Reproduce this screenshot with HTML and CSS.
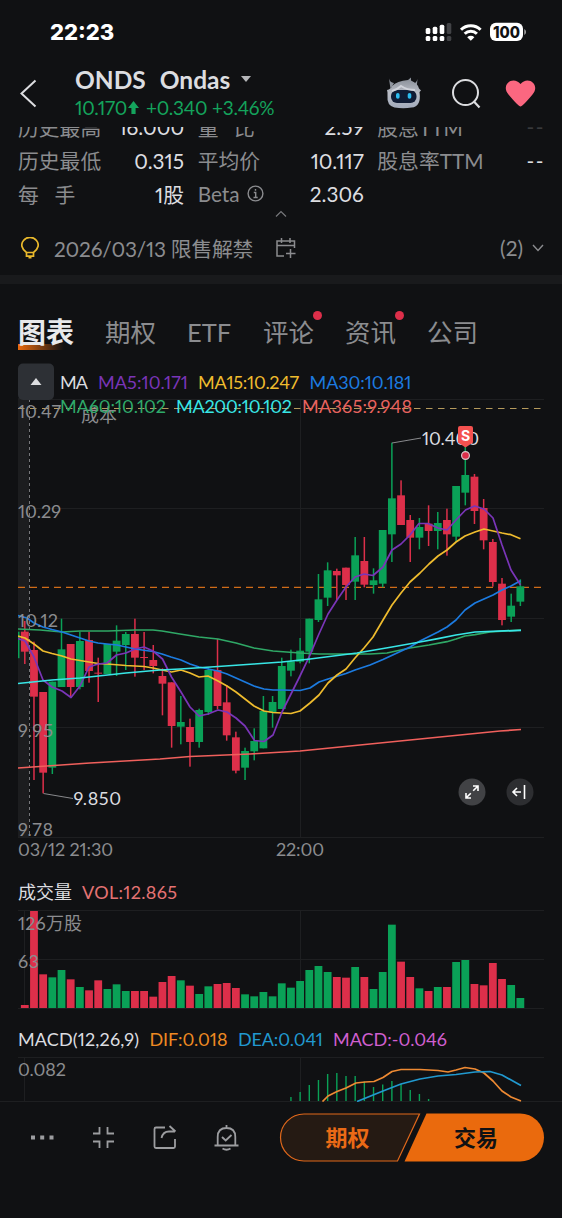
FILE: index.html
```html
<!doctype html>
<html lang="zh">
<head>
	<meta charset="UTF-8">
	<meta name="viewport" content="width=device-width, initial-scale=1.0">
	<title>ONDS Ondas</title>
	<link rel="stylesheet" href="styles.css">
</head>
<body>
	<div class="container">
		<div class="status">
			<span class="time">22:23</span>
			<svg class="signal" width="104" height="22" viewBox="424 21 104 22">
				<g fill="#fff">
					<rect x="425.7" y="28" width="4.6" height="6" rx="1.5"/><rect x="432.7" y="26.7" width="4.6" height="7.3" rx="1.5"/><rect x="439.7" y="24.7" width="4.6" height="9.3" rx="1.5"/>
					<rect x="425.7" y="36" width="4.6" height="5" rx="1.5"/><rect x="432.7" y="36" width="4.6" height="5" rx="1.5"/><rect x="439.7" y="36" width="4.6" height="5" rx="1.5"/>
				</g>
				<g fill="#424346"><rect x="446.7" y="23" width="4.6" height="11" rx="1.5"/><rect x="446.7" y="36" width="4.6" height="5" rx="1.5"/></g>
				<g fill="none" stroke="#fff" stroke-width="3">
					<path d="M461 29.700a14 14 0 0 1 19.600 0"/><path d="M464.700 33.700a8.600 8.600 0 0 1 12.200 0"/>
				</g>
				<path d="M467.200 37.200a5.200 5.200 0 0 1 7.200 0l-3.600 3.500z" fill="#fff"/>
				<rect x="490" y="22.700" width="33" height="18.300" rx="6" fill="#fff"/>
				<path d="M524.300 29v6q1.700-1 1.700-3t-1.700-3z" fill="#aaa"/>
				<text x="493" y="37.600" textLength="27" lengthAdjust="spacingAndGlyphs" class="battery">100</text>
			</svg>
		</div>
		<div class="header">
			<svg class="back" width="20" height="30" viewBox="18 79 20 30"><path d="M35.500 81.500L21.500 94.500L35.500 107.500" fill="none" stroke="#dcdde0" stroke-width="2"/></svg>
			<div class="stock">
				<div class="name"><span>ONDS</span><span class="company">Ondas</span><i class="caret"></i></div>
				<div class="price">
					<span class="last">10.170</span>
					<svg width="11" height="14" viewBox="0 0 11 14"><path d="M5.500 0L11 7H7.600V13H3.400V7H0z" fill="#14a35c"/></svg>
					<span class="diff">+0.340</span><span class="rate">+3.46%</span>
				</div>
			</div>
			<svg width="160" height="36" viewBox="384 76 160 36">
				<defs>
					<linearGradient id="fur" x1="0" y1="0" x2="0" y2="1"><stop offset="0" stop-color="#858b94"/><stop offset=".5" stop-color="#b9bdc6"/><stop offset="1" stop-color="#a2abbc"/></linearGradient>
				</defs>
				<path d="M389 79.500q1 4 5 4.500l-3.500 6zM417.500 80q-1 4-4.500 5l3.500 5z" fill="#8f959e"/>
				<path d="M387 91q4-1 5-4q5-5 16-6l3-2.500v3q7 3 8 8l2 2l-1.500 1.500q2 15-8 15.500q-8 1.500-17 0q-8-2-7-12v-3z" fill="url(#fur)"/>
				<rect x="391" y="91" width="25.500" height="13" rx="6" fill="#101c35"/>
				<path d="M392 92q6-2 9-5q6 4 14 4" fill="none" stroke="#d0d3da" stroke-width="2"/>
				<rect x="396" y="94" width="3.600" height="5.800" rx="1.800" fill="#2cbcf0"/><rect x="407.700" y="94" width="3.600" height="5.800" rx="1.800" fill="#2cbcf0"/>
				<circle cx="465.500" cy="93.500" r="12.500" fill="none" stroke="#dcdde0" stroke-width="2"/>
				<path d="M473.500 102l6 6.500" stroke="#dcdde0" stroke-width="2.200"/>
				<path d="M520.500 107.500q-2 0-12-12c-6-7-1-14 5-14q4 0 7 3.500q3-3.500 7-3.500c6 0 11 7 5 14q-10 12-12 12z" fill="#fb6780"/>
			</svg>
		</div>
		<div class="quotes">
			<div class="grid">
				<p><label>历史最高</label><b>16.000</b></p><p><label>量&emsp;比</label><b>2.59</b></p><p><label>股息TTM</label><b class="dash none">--</b></p>
				<p><label>历史最低</label><b>0.315</b></p><p><label>平均价</label><b>10.117</b></p><p><label>股息率TTM</label><b class="dash">--</b></p>
				<p><label>每&emsp;手</label><b>1股</b></p>
				<p><label>Beta <svg width="17" height="17" viewBox="0 0 17 17" fill="none" stroke="#8b8c8f" stroke-width="1.400"><circle cx="8.500" cy="8.500" r="7.400"/><path d="M6.800 7.500h1.900v5M6.500 12.500h4.200M8.500 4v1.700"/></svg></label><b>2.306</b></p>
			</div>
			<svg class="fold" width="12" height="8" viewBox="0 0 12 8"><path d="M1 6.500L6 1.500L11 6.500" fill="none" stroke="#77787b" stroke-width="1.200"/></svg>
		</div>
		<div class="event">
			<svg width="18" height="22" viewBox="0 0 18 22" fill="none" stroke="#e9b92c" stroke-width="1.700"><path d="M5.500 15.500C.500 12-.5 7 2.500 3.500a8.200 8.200 0 0 1 13 0c3 3.500 2 8.500-3 12zM5.500 15.500v3.700h7v-3.700M7.500 20.700h3"/></svg>
			<span class="event_text">2026/03/13 限售解禁</span>
			<svg class="calendar" width="20" height="20" viewBox="0 0 20 20" fill="none" stroke="#8b8c8f" stroke-width="1.500"><path d="M8 18H1V3H18.500V10M1 7.500H18.500M5.500 0V5M14 0V5M14.500 11V20M10 15.500H19.500"/></svg>
			<span class="event_count">(2)</span>
			<svg width="12" height="8" viewBox="0 0 12 8"><path d="M1 1L6 6.500L11 1" fill="none" stroke="#8b8c8f" stroke-width="1.400"/></svg>
		</div>
		<ul class="tabs">
			<li class="active"><span>图表</span></li>
			<li>期权</li>
			<li class="etf">ETF</li>
			<li class="dot">评论</li>
			<li class="dot">资讯</li>
			<li>公司</li>
		</ul>
		<svg class="chart" id="chart" viewBox="0 362 562 740">
			<defs>
				<clipPath id="plot"><rect x="18" y="398" width="526" height="704"/></clipPath>
			</defs>
			<rect x="18" y="398" width="11" height="439" fill="#1c1d1f"/>
			<path class="gridline" d="M18 399.500H544M18 508.500H544M18 618.500H544M18 727.500H544M18 837.500H544M300.500 399V837M18 910.500H544M18 959.500H544M18 1008.500H544M300.500 910V1008M24.500 910V1008M18 1057.500H544M300.500 1057V1101M24.500 1057V1101"/>
			<path d="M29.500 399V837" stroke="#77787b" stroke-dasharray="3 3"/>
			<path d="M18 408.500H541" stroke="#b59a5c" stroke-dasharray="6.500 5.500"/>
			<path d="M18 587.300H541" stroke="#d06c18" stroke-width="1.300" stroke-dasharray="7 5"/>

			<g clip-path="url(#plot)">
				<g id="candles"></g>
				<g id="lines" fill="none" stroke-width="1.700" stroke-linejoin="round"></g>
			</g>
			<g class="axis">
				<text x="18" y="418" textLength="43">10.47</text>
				<text x="81" y="422" textLength="36">成本</text>
				<text x="18" y="518" textLength="43">10.29</text>
				<text x="18" y="627" textLength="40">10.12</text>
				<text x="18" y="737" textLength="35">9.95</text>
				<text x="18" y="836" textLength="35">9.78</text>
				<text x="18" y="856" textLength="95">03/12 21:30</text>
				<text x="276" y="856" textLength="48">22:00</text>
				<text x="18" y="929.500" textLength="64">126万股</text>
				<text x="18" y="967.500" textLength="21">63</text>
				<text x="18" y="1076" textLength="48">0.082</text>
			</g>
			<rect x="18" y="363.500" width="36" height="36.500" rx="5" fill="#2d3035"/>
			<path d="M30.500 385L36 378L41.500 385z" fill="#dcdde0"/>
			<g class="legend">
				<text x="60" y="389" textLength="28" fill="#dcdde0">MA</text>
				<text x="98" y="389" textLength="90" fill="#7a35b8">MA5:10.171</text>
				<text x="198" y="389" textLength="101" fill="#efbc2e">MA15:10.247</text>
				<text x="309.500" y="389" textLength="102" fill="#1c7be0">MA30:10.181</text>
				<text x="60" y="412.500" textLength="106" fill="#2faa6a">MA60:10.102</text>
				<text x="176" y="412.500" textLength="116" fill="#38e6e6">MA200:10.102</text>
				<text x="302" y="412.500" textLength="110" fill="#e8635f">MA365:9.948</text>
				<text x="18" y="899" textLength="54" fill="#dcdde0">成交量</text>
				<text x="82" y="899" textLength="95" fill="#e57373">VOL:12.865</text>
				<text x="18" y="1045.500" textLength="121" fill="#dcdde0">MACD(12,26,9)</text>
				<text x="149.500" y="1045.500" textLength="78" fill="#ee8a22">DIF:0.018</text>
				<text x="238" y="1045.500" textLength="85" fill="#2199cf">DEA:0.041</text>
				<text x="333" y="1045.500" textLength="114" fill="#cf5fcf">MACD:-0.046</text>
				<text x="73.500" y="805" textLength="47.500" fill="#dcdde0">9.850</text>
				<text x="422" y="444.500" textLength="57" fill="#dcdde0">10.400</text>
			</g>
			<path d="M43.500 793.500L73 798.500M392 443L421 438" stroke="#88898c" fill="none"/>
			<path d="M460 426h11q2 0 2 2v14.500l-7.500 5l-7.500-5V428q0-2 2-2z" fill="#f4514f"/>
			<text x="465.500" y="440.500" text-anchor="middle" class="sell">S</text>
			<circle cx="465.500" cy="455.500" r="3.900" fill="#dd2f4a" stroke="#d8c8cb" stroke-width="1.200"/>
			<circle cx="472" cy="792" r="13.500" fill="#414245"/>
			<path d="M466.500 797.500L470.800 793.200M473.200 790.800L477.500 786.500M473 786H478V791M466 793V798H471" fill="none" stroke="#fff" stroke-width="1.600"/>
			<circle cx="520" cy="792" r="13.500" fill="#2d2e31"/>
			<path d="M524.500 785V799M521 792H513.500M517 788L513 792L517 796" fill="none" stroke="#fff" stroke-width="1.600"/>
		</svg>
		<footer class="footer">
			<svg class="tools" width="262" height="32" viewBox="0 1122 262 32" fill="none" stroke="#9c9da0" stroke-width="1.800">
				<path d="M31 1135.500h4v4h-4zM40.200 1135.500h4v4h-4zM49.500 1135.500h4v4h-4z" fill="#9c9da0" stroke="none"/>
				<path d="M93 1133.500H99.500V1127M114 1133.500H107.500V1127M93 1141.500H99.500V1148M114 1141.500H107.500V1148"/>
				<path d="M165 1127.500H156Q154.500 1127.500 154.500 1129V1146.500Q154.500 1148 156 1148H173.500Q175 1148 175 1146.500V1139M161.500 1138Q163 1131.500 169 1131.500H175M169.500 1126L175.500 1131.500"/>
				<path d="M214.500 1145.500H238.500M217.700 1145V1137Q217.700 1128 226.500 1128T235.300 1137V1145M226.500 1125V1128M222.500 1148.500Q226.500 1151 230.500 1148.500M222 1137L225.700 1140.500L231.500 1135"/>
			</svg>
			<svg class="actions" width="266" height="50" viewBox="279 1112 266 50">
				<path d="M304 1114H419.500L397.500 1161H304a23.500 23.500 0 0 1 0-47z" fill="#251a13" stroke="#e0681b" stroke-width="1.200"/>
				<path d="M426.500 1113.500H520a24 24 0 0 1 0 48H404.500z" fill="#ea6a0d"/>
				<text x="347.500" y="1146" text-anchor="middle" fill="#ea6a16">期权</text>
				<text x="476" y="1146" text-anchor="middle" fill="#101113">交易</text>
			</svg>
		</footer>
	</div>
	<script>
		var RED = '#dd2f4a', GREEN = '#0aa157';
		var step = 9.177, x0 = 24.8;
		//每根K线: 颜色, 最高, 实体上, 实体下, 最低, 成交量
		var list = [
			['r',603,635,695,732,9],['r',665,690,830,1080,291],['r',816,816,1058,1120,101],['g',785,785,1043,1062,92],
			['g',596,688,801,801,114],['r',672,672,801,830,86],['g',635,663,801,808,63],['r',635,660,753,788,53],
			['r',713,758,761,846,83],['g',672,672,762,762,57],['g',616,662,695,768,71],['g',636,642,675,750,51],
			['r',596,642,713,770,51],['r',636,711,714,750,51],['r',675,720,738,760,34],['r',745,768,791,886,78],
			['r',787,787,918,983,96],['g',828,906,920,973,83],['r',896,921,966,1040,67],['g',866,870,966,983,42],
			['g',742,750,876,885,65],['r',657,750,858,868,72],['r',795,847,946,962,75],['r',935,952,1052,1060,60],
			['g',983,993,1043,1080,41],['g',925,963,994,1021,35],['g',828,873,985,985,48],['g',828,846,877,923,35],
			['g',713,738,867,867,74],['g',689,724,752,769,61],['g',654,692,725,730,81],['g',596,596,695,730,114],
			['g',462,538,600,606,126],['g',427,451,533,558,108],['r',446,453,466,540,93],['r',443,443,495,540,91],
			['g',351,406,485,540,123],['r',351,423,494,502,93],['g',445,481,495,521,57],['g',330,330,491,502,108],
			['g',68,235,343,426,250],['r',181,226,315,315,139],['r',285,300,353,426,93],['g',294,321,353,388,59],
			['r',256,311,333,378,51],['g',276,309,333,388,63],['r',266,300,343,407,63],['g',198,198,350,365,138],
			['g',75,165,218,256,144],['r',162,170,273,312,72],['r',237,264,361,388,68],['r',357,366,486,500,135],
			['r',474,491,600,616,87],['g',521,557,590,606,69],['g',478,499,545,558,30]
		];
		function rect(x,y,w,h,color){
			return '<rect x="'+x+'" y="'+y+'" width="'+w+'" height="'+h+'" fill="'+color+'"/>';
		}
		var html = rect(15,631.7,4.5,26.5,GREEN);
		for(var i=0;i<list.length;i++){
			var item = list[i];
			var color = item[0]=='r' ? RED : GREEN;
			var x = x0+step*i;
			html += rect(x-0.75,420+item[1]/3,1.5,(item[4]-item[1])/3,color);
			html += rect(x-3.9,420+item[2]/3,7.8,(item[3]-item[2])/3,color);
			html += rect(x-3.9,1008-item[5]/3,7.8,item[5]/3,color);
		}
		//MACD柱
		var macd = [4,9,16,21,27,28,25,25,19.5,14,16.5,20,17,11,7,2];
		for(var i=0;i<macd.length;i++){
			html += rect(x0+step*(i+29)-0.7,1101-macd[i],1.4,macd[i],GREEN);
		}
		candles.innerHTML = html;

		//均线
		var paths = [
			['#f0605c','18,768 90,763 160,759 190,756.5 250,754 300,751 370,744 420,739 475,733.5 500,731 521,729.5'],
			['#2fa866','18,629 40,630 62,632 80,631 108,631 135,630 153,630 162,631 180,634 199,637 218,639 236,643 254,648 273,651 300,653 319,654 370,654 387,653 410,648 429,645 447,641.7 456,639 465,636 475,634.7 490,632 521,630'],
			['#1c7be0','18,615.5 27,618 34,623 43,627 52,629.5 62,632 71,635 80,638 89,641 98,643 107,644 117,645 135,649 153,651.5 162,654 171,657 181,660 190,664 199,667 218,671 227,674 236,678 254,686 264,689 273,690 282,690 300,690.5 310,688 319,682 328,679 346,673.5 355,670 370,665 383,659.5 410,647 420,641 438,632 447,627 456,620 465,610 475,603 484,599 493,595 502,590 511,586 520.5,580.7'],
			['#efbc2e','18,636 25,638 34,644 43,651 52,653.5 62,656 71,659 80,660.5 89,662 98,663.5 107,664 126,665.5 144,666.5 153,668 162,670 171.5,672 181,670 190,673 199,677 208,676 218,681 227,686 236,692 254,706 264,711 273,712.5 291,713.5 300,711 310,703 319,695 328,683 337,675 346,669 355,658 364,648 373,637 383,620 392,605 401,593 410,582 420,573 429,564 438,556 447,550 456,542 465,536 475,532 484,529 493,531 502,533 511,534.7 520.5,538.7'],
			['#7a35b8','18,638.5 25,641 34,657 43,680 52,687 62,691 71,697.5 80,686 89,667 98,664 107,663 116.5,655 126,653 135,649 144,647 153,651 162.5,659 171.5,677 181,692 190,707 199,716 208,714 218,710 227,712 236,718 245,726 254.5,740.5 264,741.5 273,735 282,712 300,676 310,655 318.5,635 328,614 337,600 346,587 355,577 364,574 373,575.5 383,567 392,550 401,544 410,535 419,523.5 428,523.5 438,528 447,530 456,520 465.5,510 474.5,506 484,509 493,518 502,545 511,570 520.5,585'],
			['#38e6e6','18,683.5 52,680 80,678 126,673 160,670 180,669 218,666.5 254,664 282,662 310,659 357,653 392,647 420,642 438,638.7 456,635 475,632 521,630.3'],
			['#ee8a33','322.5,1101.5 328,1096 337,1091.5 346,1088 356,1083 365,1082 374,1081.5 383,1077.5 392,1071.5 401,1069.5 420,1069.5 438,1070.5 448,1072 456,1070 465,1067.5 475,1069 484,1073 493,1081 502,1091 511,1097 521,1101'],
			['#2199cf','357,1101.5 383,1091 401,1084 420,1079 438,1076 456,1074.5 475,1072 490,1071.5 502,1075 521,1085.5']
		];
		html = '';
		for(var i=0;i<paths.length;i++){
			html += '<polyline stroke="'+paths[i][0]+'" points="'+paths[i][1]+'"/>';
		}
		lines.innerHTML = html;
	</script>
</body>
</html>
```
FILE: styles.css
```css
*,*::before,*::after{box-sizing:border-box;}
html,body,ul,li,p{
	margin:0;padding:0;
	list-style:none;
}
body{
	background:#101113;
	color:#dcdde0;
	font-family:Lato,"Noto Sans CJK SC",sans-serif;
	font-variant-numeric:proportional-nums;
}
svg{
	display:block;
	flex:none;
}
.container{
	width:562px;
	height:1218px;
	overflow:hidden;
}
.status{
	display:flex;
	justify-content:space-between;
	align-items:center;
	height:64px;
	padding:0 34px 0 50px;
}
.time{
	font:800 22px Inter,sans-serif;
	color:#fff;
}
.battery{
	font:800 16px Inter,sans-serif;
	fill:#101113;
}
.header{
	display:flex;
	align-items:center;
	height:63px;
	padding:0 18px 5px;
}
.stock{
	flex:1;
	margin-left:37px;
}
.name{
	display:flex;
	align-items:center;
	height:29px;
	font-size:24.5px;
	font-weight:700;
}
.company{
	margin-left:14px;
}
.caret{
	margin-left:11px;
	border:5px solid transparent;
	border-top:6px solid #b5b6b9;
	border-bottom:0;
}
.price{
	display:flex;
	align-items:center;
	height:28px;
	font-size:19px;
	letter-spacing:-.25px;
	color:#14a35c;
}
.last{
	width:49px;
}
.price svg{
	margin:0 7px 0 4px;
}
.diff{
	width:58px;
}
.rate{
	margin-left:8px;
}
.quotes{
	height:94px;
	overflow:hidden;
}
.grid{
	display:grid;
	grid-template-columns:repeat(3,1fr);
	grid-auto-rows:33.5px;
	column-gap:13.5px;
	margin-top:-17px;
	padding:0 18.5px 0 18px;
}
.grid p{
	display:flex;
	justify-content:space-between;
	align-items:center;
	font-size:20.8px;
	white-space:nowrap;
}
.grid label{
	display:flex;
	align-items:center;
	gap:7px;
	color:#8b8c8f;
}
.grid b{
	font-weight:400;
}
.grid .dash{
	letter-spacing:1.5px;
	margin-right:-1.5px;
}
.grid .none{
	opacity:.2;
}
.fold{
	margin:-1px auto 0;
}
.event{
	display:flex;
	align-items:center;
	height:63px;
	padding:2px 18px 3px 21px;
	border-bottom:9px solid #191a1c;
	font-size:20.8px;
	color:#8b8c8f;
}
.event_text{
	width:201px;
	margin-left:15px;
	letter-spacing:-.2px;
	white-space:nowrap;
}
.calendar{
	margin-left:21px;
}
.event_count{
	margin:0 9px 0 auto;
}
.tabs{
	display:flex;
	height:78px;
	padding:21px 0 0 18px;
	gap:31px;
	font-size:25.5px;
	line-height:54px;
	color:#8b8c8f;
}
.active{
	position:relative;
	font-size:28px;
	font-weight:700;
	color:#e8e9eb;
}
.active span{
	position:relative;
}
.etf{
	width:45px;
}
.active::before{
	content:"";
	position:absolute;
	left:0;top:39px;
	width:46px;
	height:6px;
	background:linear-gradient(90deg,#ea6a0d,transparent);
}
.dot{
	position:relative;
}
.dot::after{
	content:"";
	position:absolute;
	top:6px;right:-8px;
	width:9px;
	height:9px;
	border-radius:50%;
	background:#dd2f4a;
}
.chart{
	width:562px;
	height:740px;
}
.gridline{
	stroke:#1e1f21;
	fill:none;
}
.axis{
	font-size:18px;
	fill:#8b8c8f;
}
.legend{
	font-size:18px;
}
.sell{
	font:bold 14px Inter,sans-serif;
	fill:#fff;
}
.footer{
	display:flex;
	justify-content:space-between;
	height:116px;
	padding:10px 17px 0 0;
	border-top:1px solid #1e1f21;
	margin-top:-1px;
}
.tools{
	margin-top:10px;
}
.actions{
	font-size:22px;
	font-weight:700;
}
```
